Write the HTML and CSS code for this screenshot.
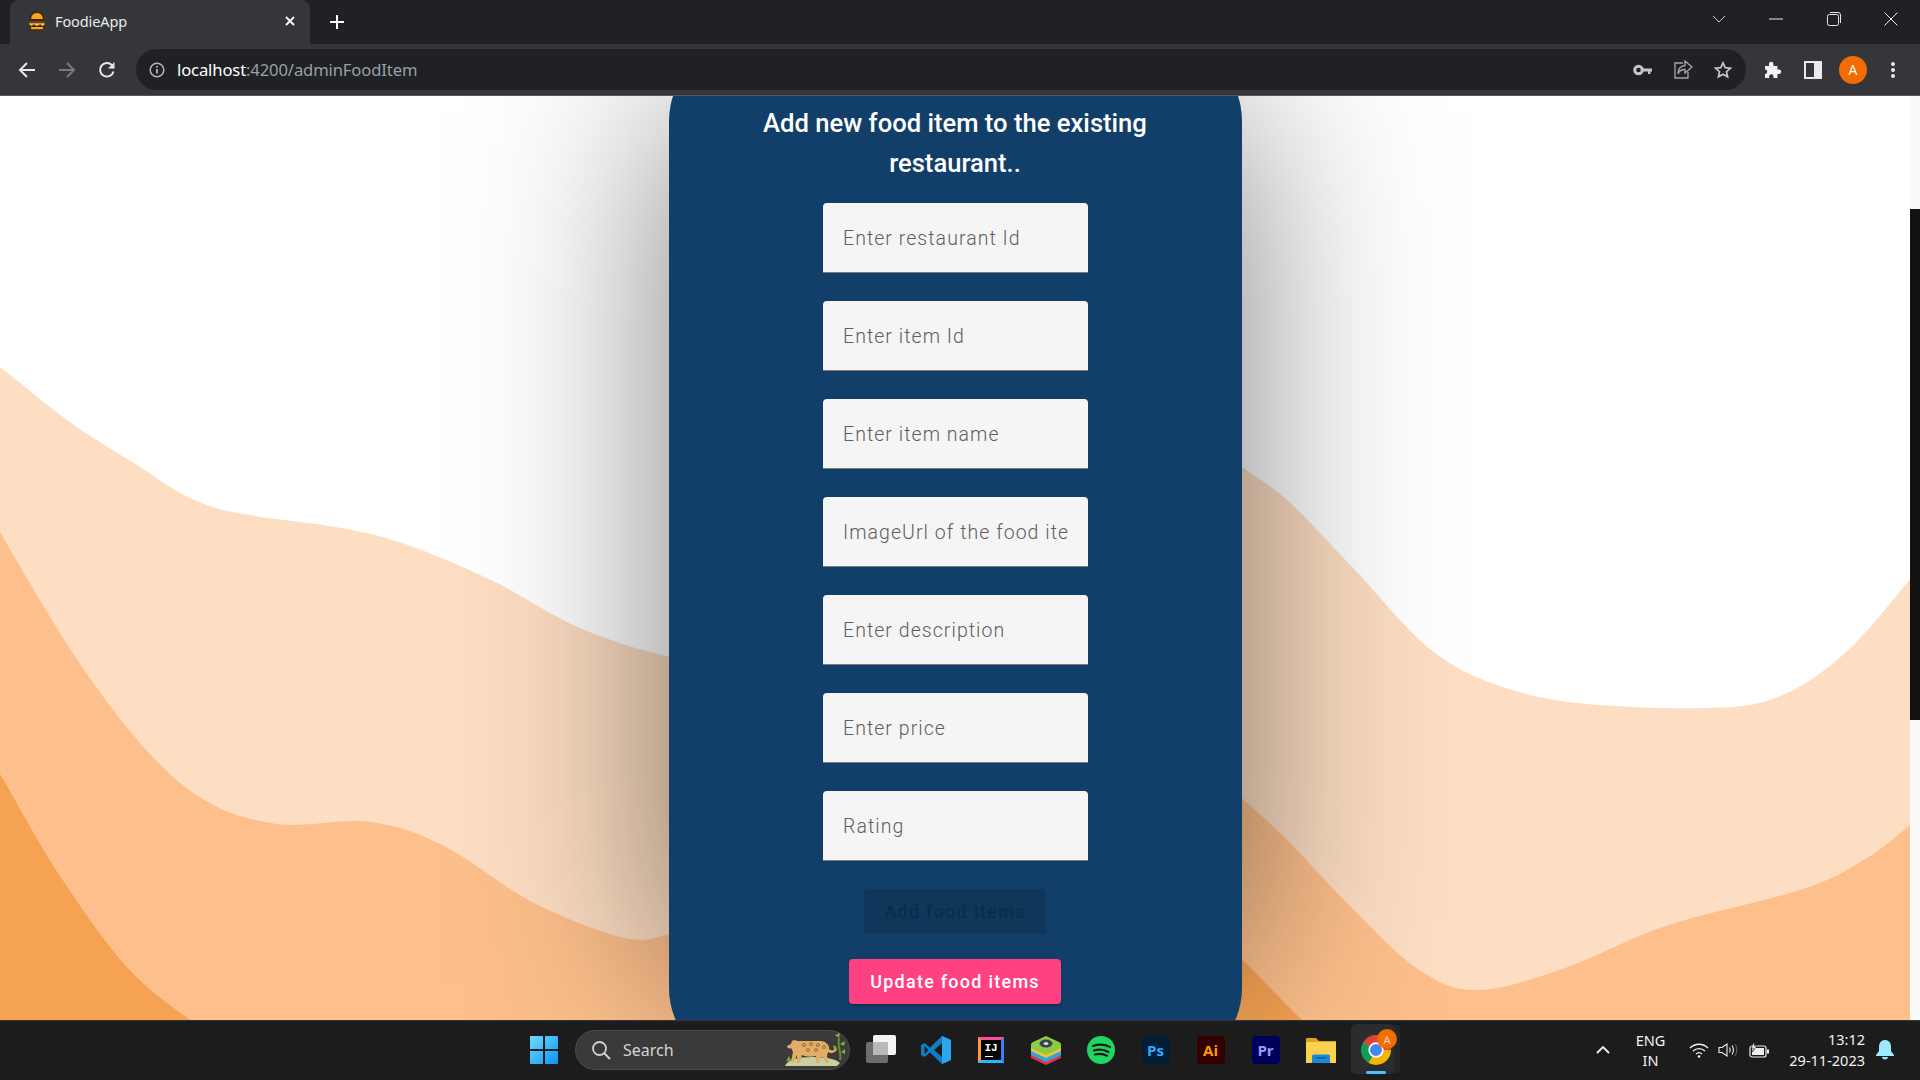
FILE: index.html
```html
<!DOCTYPE html>
<html lang="en">
<head>
<meta charset="utf-8">
<title>FoodieApp</title>
<link rel="stylesheet" href="styles.css">
</head>
<body>
<header class="tabstrip">
  <div class="tab">
    <svg class="favicon" width="20" height="20" viewBox="0 0 18 18"><path d="M3 8C3 3 6 1 9 1s6 2 6 7z" fill="#f5a623" stroke="#4a2208" stroke-width="1.4"/><path d="M2 9h14l-1 2H3z" fill="#7a3b12"/><path d="M2 11h14v1l-2 1.500-2-1.500-3 1.500-3-1.500-2 1.500-2-1.500z" fill="#ffc53a"/><path d="M3 14h12v1.500a1.500 1.500 0 0 1-1.500 1.500h-9A1.500 1.500 0 0 1 3 15.500z" fill="#f5a623" stroke="#4a2208" stroke-width="1"/></svg>
    <span class="tab-title">FoodieApp</span>
    <svg class="tab-close" width="12" height="12" viewBox="0 0 12 12"><path d="M2 2l8 8M10 2l-8 8" stroke="#fff" stroke-width="1.800"/></svg>
  </div>
  <div class="newtab"><svg width="16" height="16" viewBox="0 0 16 16"><path d="M8 1v14M1 8h14" stroke="#fff" stroke-width="2"/></svg></div>
  <div class="winctl chevron"><svg width="14" height="8" viewBox="0 0 14 8"><path d="M1 1l6 6 6-6" fill="none" stroke="#c9cacc" stroke-width="1"/></svg></div>
  <div class="winctl"><svg width="14" height="2" viewBox="0 0 14 2"><path d="M0 1h14" stroke="#e8e8e8" stroke-width="1"/></svg></div>
  <div class="winctl"><svg width="14" height="14" viewBox="0 0 14 14"><rect x="0.500" y="2.500" width="11" height="11" rx="2" fill="none" stroke="#e8e8e8"/><path d="M3 .5h8a2.500 2.500 0 0 1 2.500 2.500v8" fill="none" stroke="#e8e8e8"/></svg></div>
  <div class="winctl"><svg width="14" height="14" viewBox="0 0 14 14"><path d="M.5.5l13 13M13.500.5l-13 13" stroke="#e8e8e8" stroke-width="1"/></svg></div>
</header>

<nav class="toolbar">
  <div class="tbtn"><svg width="18" height="18" viewBox="0 0 18 18"><path d="M17 9H2M9 2L2 9l7 7" fill="none" stroke="#e8eaed" stroke-width="2"/></svg></div>
  <div class="tbtn"><svg width="18" height="18" viewBox="0 0 18 18"><path d="M1 9h15M9 2l7 7-7 7" fill="none" stroke="#77797c" stroke-width="2"/></svg></div>
  <div class="tbtn"><svg width="18" height="18" viewBox="0 0 18 18"><path d="M15.500 10.500A6.800 6.800 0 1 1 13.800 4" fill="none" stroke="#e8eaed" stroke-width="2"/><path d="M16.500 1v6.500H10z" fill="#e8eaed"/></svg></div>
  <div class="address">
    <svg class="info" width="16" height="16" viewBox="0 0 16 16"><circle cx="8" cy="8" r="6.800" fill="none" stroke="#b4b6b9" stroke-width="1.500"/><path d="M8 7v4.500" stroke="#b4b6b9" stroke-width="1.800"/><circle cx="8" cy="4.800" r="1" fill="#b4b6b9"/></svg>
    <span class="url"><span class="url-host">localhost</span>:4200/adminFoodItem</span>
    <div class="addr-icons">
      <div class="tbtn"><svg width="20" height="12" viewBox="0 0 20 12"><circle cx="5.500" cy="6" r="3.800" fill="none" stroke="#c4c7c5" stroke-width="3"/><path d="M9 4.500h10v3h-1.500v2.500h-2.500V7.500H9z" fill="#c4c7c5"/></svg></div>
      <div class="tbtn"><svg width="20" height="20" viewBox="0 0 20 20"><path d="M10 3H2v15h13v-6" fill="none" stroke="#a5a7aa" stroke-width="1.300"/><path d="M12 1l7 6-7 6V9.500C8 9.500 6 11 5 14c0-5 2.500-8 7-8.500z" fill="none" stroke="#a5a7aa" stroke-width="1.300"/></svg></div>
      <div class="tbtn"><svg width="18" height="18" viewBox="0 0 18 18"><path d="M9 1.800l2.200 4.800 5.200.6-3.900 3.500 1.100 5.100L9 13.200l-4.600 2.600 1.100-5.100L1.600 7.200l5.200-.6z" fill="none" stroke="#c4c7c5" stroke-width="1.700"/></svg></div>
    </div>
  </div>
  <div class="tbtn"><svg width="18" height="18" viewBox="0 0 18 18"><path d="M1 5h4V3a2.200 2.200 0 0 1 4.400 0v2h4v3.500h1.500a2.300 2.300 0 0 1 0 4.600h-1.500V17H9.500v-1.500a2.200 2.200 0 0 0-4.400 0V17H1v-4a2.200 2.200 0 0 0 0-4.500z" fill="#f1f3f4"/></svg></div>
  <div class="tbtn"><svg width="18" height="18" viewBox="0 0 18 18"><rect x="1" y="1" width="16" height="16" fill="none" stroke="#e8eaed" stroke-width="2"/><rect x="10" y="1" width="7" height="16" fill="#e8eaed"/></svg></div>
  <div class="tbtn"><span class="avatar">A</span></div>
  <div class="tbtn"><svg width="6" height="18" viewBox="0 0 6 18"><circle cx="3" cy="3" r="2" fill="#e8eaed"/><circle cx="3" cy="9" r="2" fill="#e8eaed"/><circle cx="3" cy="15" r="2" fill="#e8eaed"/></svg></div>
</nav>

<div class="viewport">
  <main class="page">
    <svg class="waves" viewBox="0 96 1910 924" preserveAspectRatio="none" aria-hidden="true">
      <path fill="#fddec3" d="M0 367C30 390 60 417 89 435C104 445 119 454 134 463C153 475 172 490 192 499C205 505 218 509 232 512C244 514 255 516 268 518C290 521 313 523 335 527C358 531 380 535 402 543C432 553 461 566 491 580C521 594 550 615 580 628C610 641 640 650 670 657L1242 467C1257 478 1268 483 1287 500C1306 517 1330 544 1354 569C1378 594 1406 630 1430 649C1454 668 1472 676 1497 685C1522 694 1542 699 1577 703C1612 707 1674 709 1707 708C1740 707 1755 706 1778 697C1801 688 1823 673 1845 653C1867 633 1888 606 1910 579V1030H0Z"/>
      <path fill="#fdc08c" d="M0 532C11 551 45 610 67 644C89 678 112 710 134 736C156 762 177 783 201 798C225 813 249 820 277 824C305 828 343 818 371 822C399 826 419 833 446 847C473 861 506 889 536 904C566 919 603 933 625 938C647 943 655 937 670 934L1242 798C1257 812 1268 821 1287 840C1306 859 1332 888 1354 910C1376 932 1400 958 1421 971C1442 984 1454 991 1479 990C1504 989 1537 978 1568 967C1599 956 1627 939 1666 926C1705 913 1766 901 1800 890C1834 879 1849 869 1867 858C1885 847 1896 836 1910 825V1030H0Z"/>
      <path fill="#f5a353" d="M0 774C10 790 37 841 58 873C79 905 103 940 125 965C147 990 170 1005 190 1020L200 1030H0Z"/>
      <path fill="#f5a353" d="M1200 920L1242 959C1262 980 1282 1000 1302 1020L1312 1030H1200Z"/>
    </svg>
    <div class="card-wrap">
      <section class="card">
        <h2 class="card-title">Add new food item to the existing restaurant..</h2>
        <input class="field" type="text" placeholder="Enter restaurant Id">
        <input class="field" type="text" placeholder="Enter item Id">
        <input class="field" type="text" placeholder="Enter item name">
        <input class="field" type="text" placeholder="ImageUrl of the food item">
        <input class="field" type="text" placeholder="Enter description">
        <input class="field" type="text" placeholder="Enter price">
        <input class="field" type="text" placeholder="Rating">
        <button class="btn btn-add" type="button" disabled>Add food Items</button>
        <button class="btn btn-update" type="button">Update food items</button>
      </section>
    </div>
  </main>
  <div class="scrolltrack"><div class="scrollthumb"></div></div>
</div>

<footer class="taskbar">
  <div class="slot">
    <svg width="30" height="30" viewBox="0 0 30 30"><defs><linearGradient id="win" x1="0" y1="0" x2="1" y2="1"><stop offset="0" stop-color="#6fdcff"/><stop offset="1" stop-color="#0a94f5"/></linearGradient></defs><path d="M1 2a1 1 0 0 1 1-1h12v13H1zM16 1h12a1 1 0 0 1 1 1v12H16zM1 16h13v13H2a1 1 0 0 1-1-1zM16 16h13v12a1 1 0 0 1-1 1H16z" fill="url(#win)"/></svg>
  </div>
  <div class="search">
    <svg width="20" height="20" viewBox="0 0 20 20"><circle cx="8.500" cy="8.500" r="6.500" fill="none" stroke="#d0d0d0" stroke-width="1.800"/><path d="M13 13l6 6" stroke="#d0d0d0" stroke-width="2"/></svg>
    <span class="search-label">Search</span>
    <svg class="jaguar" width="62" height="34" viewBox="0 0 62 34"><path d="M1 33c2-6 12-9 28-9s24 3 27 6l-3 3z" fill="#c9cf9f"/><path d="M2 28l3-5 2 4 2-4 1 5z" fill="#7f9a45"/><path d="M56 27c2-6-3-14-1-22" fill="none" stroke="#5f8f30" stroke-width="2"/><path d="M55 5l-4-3 5-2zM56 11l5-3-1 5zM53 14l-4-2 1 5zM57 19l4-3v5z" fill="#7ab33f"/><path d="M7 11l1-3 2-1 4 1h22c5 0 8 3 9 6v2c2 2 5 2 7-1l1 1c-1 4-6 5-9 3l-1 4 2 7h-3l-3-6h-3l-1 6h-3v-7c-5 1-10 1-14-1l-2 8h-3v-8l-3 7h-3l2-10-2-4c-2 1-4 0-4-2z" fill="#e2ad68"/><circle cx="20" cy="12" r="1.500" fill="none" stroke="#9c6a30"/><circle cx="27" cy="11" r="1.500" fill="none" stroke="#9c6a30"/><circle cx="34" cy="12" r="1.500" fill="none" stroke="#9c6a30"/><circle cx="40" cy="14" r="1.500" fill="none" stroke="#9c6a30"/><circle cx="24" cy="17" r="1.500" fill="none" stroke="#9c6a30"/><circle cx="32" cy="17" r="1.500" fill="none" stroke="#9c6a30"/></svg>
  </div>
  <div class="slot first-app">
    <svg width="30" height="30" viewBox="0 0 30 30"><rect x="0" y="7" width="22" height="21" rx="2" fill="#6d6d6d"/><rect x="7" y="0" width="23" height="20" rx="2" fill="#f4f4f4"/><rect x="7" y="7" width="15" height="13" fill="#b9b9b9"/></svg>
  </div>
  <div class="slot">
    <svg width="30" height="30" viewBox="0 0 30 30"><path d="M21 1l9 4v20l-9 4L9 17.500 3.500 22 0 20v-10l3.500-2L9 12.500z" fill="#0e7ec9"/><path d="M21 1l9 4v20l-9 4z" fill="#2aa6ef"/><path d="M21 8l-8 7 8 7z" fill="#1c1c1c"/><path d="M3.500 11l4 4-4 4z" fill="#1c1c1c"/></svg>
  </div>
  <div class="slot">
    <div class="ij"><span class="ij-text">IJ</span><span class="ij-bar"></span></div>
  </div>
  <div class="slot">
    <svg width="30" height="30" viewBox="0 0 30 30"><path d="M15 13L30 20v3L15 30 0 23v-3z" fill="#e8343f"/><path d="M15 9L30 16v4L15 27 0 20v-4z" fill="#29a5e8"/><path d="M15 6L30 13v3L15 23 0 16v-3z" fill="#f4c430"/><path d="M15 1l13 6c2 1 2 2 2 3v3L15 20 0 13v-3c0-1 0-2 2-3z" fill="#8ccb45"/><ellipse cx="15" cy="8.500" rx="6.500" ry="4" fill="#39424e"/><ellipse cx="15" cy="8.500" rx="2.500" ry="1.500" fill="#d9d9d9"/></svg>
  </div>
  <div class="slot">
    <svg width="28" height="28" viewBox="0 0 28 28"><circle cx="14" cy="14" r="14" fill="#1ed760"/><path d="M6 10c6-2 12-1.500 17 1M7 14.500c5-1.500 10-1 14.500 1.500M8 18.500c4-1 8-.8 12 1.200" fill="none" stroke="#1c1c1c" stroke-width="2.200" stroke-linecap="round"/></svg>
  </div>
  <div class="slot"><div class="adobe adobe-ps">Ps</div></div>
  <div class="slot"><div class="adobe adobe-ai">Ai</div></div>
  <div class="slot"><div class="adobe adobe-pr">Pr</div></div>
  <div class="slot">
    <svg width="30" height="26" viewBox="0 0 30 26"><path d="M0 2a1 1 0 0 1 1-1h9l3 3h17v6H0z" fill="#e2a21f"/><path d="M0 5h30v21H0z" fill="#fbd24e"/><path d="M6 19a1.500 1.500 0 0 1 1.500-1.500h15A1.500 1.500 0 0 1 24 19v7H6z" fill="#1e88d8"/><rect x="10" y="20" width="10" height="1.500" fill="#0f5fa8"/></svg>
  </div>
  <div class="slot slot-active">
    <div class="active-bg"></div>
    <div class="chrome"><div class="chrome-inner"></div></div>
    <span class="badge">A</span>
    <span class="underline"></span>
  </div>
  <div class="tray">
    <svg class="tray-chev" width="14" height="8" viewBox="0 0 14 8"><path d="M1 7l6-6 6 6" fill="none" stroke="#f0f0f0" stroke-width="1.800"/></svg>
    <div class="lang"><span>ENG</span><span>IN</span></div>
    <svg width="20" height="16" viewBox="0 0 20 16"><path d="M1 6c5-5 13-5 18 0M4 9c3.500-3.200 8.500-3.200 12 0M7 12c1.800-1.600 4.200-1.600 6 0" fill="none" stroke="#f0f0f0" stroke-width="1.300"/><circle cx="10" cy="14.500" r="1.300" fill="#f0f0f0"/></svg>
    <svg width="20" height="16" viewBox="0 0 20 16"><path d="M1 5.500h3L9 2v12l-5-3.500H1z" fill="none" stroke="#f0f0f0" stroke-width="1.100"/><path d="M11.500 5.500c1 1.500 1 3.500 0 5M14 3.500c1.800 2.800 1.800 6.200 0 9" fill="none" stroke="#f0f0f0" stroke-width="1.100"/><path d="M17 2c2.300 3.600 2.300 8.400 0 12" fill="none" stroke="#6e6e6e" stroke-width="1"/></svg>
    <svg class="tray-batt" width="20" height="16" viewBox="0 0 20 16"><rect x="1" y="4" width="16" height="11" rx="2" fill="none" stroke="#f0f0f0" stroke-width="1.200"/><rect x="3" y="6" width="12" height="7" fill="#f0f0f0"/><rect x="18" y="7.500" width="2" height="4" fill="#f0f0f0"/><path d="M5 0L2 6h2.500L3.500 10 8 4H5.500z" fill="#f0f0f0" stroke="#1c1c1c" stroke-width=".6"/></svg>
    <div class="clock"><span>13:12</span><span>29-11-2023</span></div>
    <svg class="bell" width="18" height="20" viewBox="0 0 18 20"><path d="M9 0c4 0 6 3 6 7v4l3 4v1H0v-1l3-4V7c0-4 2-7 6-7z" fill="#9be9ff"/><path d="M6 17h6c0 1.500-1.300 2.500-3 2.500S6 18.500 6 17z" fill="#9be9ff"/></svg>
  </div>
</footer>
</body>
</html>
```

FILE: styles.css
```css
* { box-sizing: border-box; }
html, body { margin: 0; height: 100%; }
body {
  display: flex;
  flex-direction: column;
  height: 100vh;
  overflow: hidden;
  background: #202124;
  font-family: "Open Sans", "Noto Sans", sans-serif;
}

/* tab strip */
.tabstrip {
  display: flex;
  align-items: stretch;
  flex: 0 0 44px;
  padding-left: 10px;
  background: #202124;
}
.tab {
  display: flex;
  align-items: center;
  width: 300px;
  padding: 0 14px 2px 17px;
  background: #35363a;
  border-radius: 9px 9px 0 0;
}
.favicon { flex: none; }
.tab-title {
  flex: 1;
  margin-left: 8px;
  font-size: 14.500px;
  letter-spacing: -0.1px;
  color: #e8eaed;
  font-family: "Noto Sans", sans-serif;
}
.tab-close { flex: none; }
.newtab {
  display: flex;
  align-items: center;
  justify-content: center;
  width: 32px;
  margin-left: 11px;
  margin-right: auto;
}
.winctl {
  display: flex;
  align-items: center;
  justify-content: center;
  width: 57.500px;
  padding-bottom: 6px;
}
.winctl.chevron { width: 40px; margin-right: 9px; }

/* toolbar */
.toolbar {
  display: flex;
  align-items: center;
  flex: 0 0 52px;
  padding: 0 7px;
  background: #35363a;
  border-bottom: 1px solid #55565a;
}
.tbtn {
  display: flex;
  align-items: center;
  justify-content: center;
  flex: 0 0 40px;
  height: 36px;
}
.address {
  display: flex;
  align-items: center;
  flex: 1;
  height: 41px;
  margin: 0 7px 0 9px;
  padding: 0 3px 0 13px;
  background: #202124;
  border-radius: 21px;
}
.info { flex: none; }
.url {
  flex: 1;
  margin-left: 12px;
  font-family: "Noto Sans", sans-serif;
  font-size: 16.600px;
  letter-spacing: -0.12px;
  color: #9aa0a6;
}
.url-host { color: #fff; }
.addr-icons { display: flex; }
.avatar {
  display: flex;
  align-items: center;
  justify-content: center;
  width: 28px;
  height: 28px;
  border-radius: 50%;
  background: #f26c02;
  color: #fff;
  font-size: 14px;
}

/* page */
.viewport {
  display: flex;
  flex: 1;
  min-height: 0;
}
.page {
  position: relative;
  flex: 1;
  display: flex;
  justify-content: center;
  overflow: hidden;
  background: #fff;
}
.waves {
  position: absolute;
  inset: 0;
  width: 100%;
  height: 100%;
}
.scrolltrack {
  flex: 0 0 10px;
  background: #fafafa;
}
.scrollthumb {
  height: 511px;
  margin-top: 113px;
  background: #121212;
}
.card-wrap {
  position: relative;
  flex: none;
  width: 573px;
  height: 1027px;
  margin-top: -55px;
}
.card-wrap::before {
  content: "";
  position: absolute;
  inset: 70px 0 85px;
  background: rgba(0, 0, 0, .5);
  filter: blur(100px);
}
.card {
  position: relative;
  display: flex;
  flex-direction: column;
  align-items: center;
  height: 100%;
  padding-top: 62px;
  background: #123f69;
  border-radius: 80px;
  font-family: Roboto, sans-serif;
}
.card-title {
  width: 440px;
  margin: 0 0 20px;
  font-size: 25.600px;
  font-weight: 500;
  line-height: 40px;
  text-align: center;
  color: #fff;
}
.field {
  flex: none;
  width: 265px;
  height: 70px;
  margin-bottom: 28px;
  padding: 1px 20px 0 20.500px;
  border: 0;
  border-bottom: 1px solid #7c7c7c;
  border-radius: 4px 4px 0 0;
  background: #f5f5f5;
  font-family: Roboto, sans-serif;
  font-size: 19.500px;
  font-weight: 300;
  letter-spacing: 1.05px;
  color: #333;
}
.field::placeholder { color: #5e5e5e; opacity: 1; }
.btn {
  flex: none;
  height: 45px;
  border: 0;
  border-radius: 4px;
  font-family: Roboto, sans-serif;
  font-size: 18px;
  font-weight: 500;
  letter-spacing: 1.25px;
}
.btn-add {
  width: 182px;
  margin-bottom: 25px;
  background: #0f3759;
  color: #0e2c49;
}
.btn-update {
  width: 212px;
  background: #ff4081;
  color: #fff;
  box-shadow: 0 3px 3px -2px rgba(0,0,0,.2), 0 2px 4px rgba(0,0,0,.14);
}

/* taskbar */
.taskbar {
  display: flex;
  align-items: center;
  flex: 0 0 60px;
  padding: 0 0 2px 516px;
  background: #1c1c1c;
  border-top: 1px solid #363636;
}
.slot {
  position: relative;
  display: flex;
  align-items: center;
  justify-content: center;
  flex: 0 0 55px;
  height: 57px;
}
.first-app { margin-left: 3px; }
.search {
  display: flex;
  align-items: center;
  flex: 0 0 275px;
  height: 40px;
  margin-left: 4px;
  padding-left: 15px;
  background: #3a3a3a;
  border: 1px solid #4b4b4b;
  border-radius: 20px;
}
.search-label {
  margin-left: 12px;
  font-size: 16px;
  font-family: "Noto Sans", sans-serif;
  color: #d4d4d4;
}
.jaguar { margin-left: auto; margin-right: 3px; }
.ij {
  display: flex;
  flex-direction: column;
  width: 26px;
  height: 26px;
  padding: 3px 0 0 4px;
  background: #000;
  border: 3px solid;
  border-color: #ff4d8d #3b7dff #25b7ff #ff9a3c;
}
.ij-text {
  font-family: "Liberation Mono", monospace;
  font-size: 11px;
  line-height: 10px;
  font-weight: 700;
  color: #fff;
}
.ij-bar {
  width: 8px;
  height: 1.500px;
  margin-top: 3px;
  background: #fff;
}
.adobe {
  display: flex;
  align-items: center;
  justify-content: center;
  width: 28px;
  height: 28px;
  border-radius: 4px;
  font-family: "Open Sans", sans-serif;
  font-size: 15px;
  font-weight: 700;
}
.adobe-ps { background: #001e36; color: #31a8ff; }
.adobe-ai { background: #330000; color: #ff9a00; }
.adobe-pr { background: #00005b; color: #9999ff; }
.active-bg {
  position: absolute;
  left: 3px;
  top: 3px;
  width: 44px;
  height: 50px;
  background: #2b2c2e;
  border-radius: 5px;
  box-shadow: 6px 0 0 -1px #242527;
}
.chrome {
  position: relative;
  display: flex;
  align-items: center;
  justify-content: center;
  width: 30px;
  height: 30px;
  border-radius: 50%;
  background: conic-gradient(from -60deg, #db4437 0 150deg, #f4b400 150deg 270deg, #0f9d58 270deg 360deg);
}
.chrome-inner {
  width: 14px;
  height: 14px;
  border-radius: 50%;
  background: #4285f4;
  border: 2px solid #fff;
  box-sizing: content-box;
  transform: scale(.85);
}
.badge {
  position: absolute;
  left: 29px;
  top: 8px;
  display: flex;
  align-items: center;
  justify-content: center;
  width: 20px;
  height: 20px;
  border-radius: 50%;
  background: #f26c02;
  color: #ffd9b5;
  font-size: 11px;
}
.underline {
  position: absolute;
  left: 18px;
  bottom: 4px;
  width: 20px;
  height: 3px;
  border-radius: 2px;
  background: #4cc2ff;
}
.tray {
  display: flex;
  align-items: center;
  margin-left: auto;
  padding-right: 26px;
  color: #f2f2f2;
  font-family: "Noto Sans", sans-serif;
}
.tray > svg { flex: none; margin-left: 9px; }
.tray > .tray-chev { margin-right: 26px; }
.tray > .tray-batt { margin-left: 11px; }
.lang {
  display: flex;
  flex-direction: column;
  align-items: center;
  margin-right: 15px;
  font-size: 14.500px;
  line-height: 20px;
}
.clock {
  display: flex;
  flex-direction: column;
  align-items: flex-end;
  margin-left: 20px;
  margin-right: 2px;
  font-size: 14.500px;
  line-height: 21px;
}
```
